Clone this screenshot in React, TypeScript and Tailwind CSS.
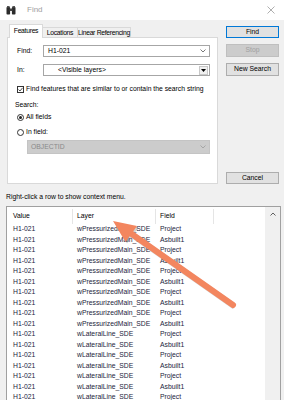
import React from "react";

const rows = [
  ...Array.from({ length: 10 }, (_, i) => ({
    layer: "wPressurizedMain_SDE",
    field: i % 2 === 0 ? "Project" : "Asbuilt1",
  })),
  ...Array.from({ length: 7 }, (_, i) => ({
    layer: "wLateralLine_SDE",
    field: i % 2 === 0 ? "Project" : "Asbuilt1",
  })),
];

function Chevron({ color = "#555" }: { color?: string }) {
  return (
    <svg width="6" height="4" viewBox="0 0 6 4">
      <path d="M0.5 0.5 L3 3 L5.5 0.5" fill="none" stroke={color} strokeWidth="0.8" />
    </svg>
  );
}

export default function App() {
  return (
    <div
      className="relative w-[284px] h-[400px] overflow-hidden bg-[#f0f0f0] text-[6.8px] text-black"
      style={{ fontFamily: '"Liberation Sans", Arial, sans-serif' }}
    >
      {/* title bar */}
      <div className="h-[20px] bg-white flex items-center pl-[6px] pr-[9px]">
        <svg width="10" height="9" viewBox="0 0 10 9">
          <rect x="0.5" y="1" width="3.6" height="7.5" rx="0.8" fill="#2b2b2b" />
          <rect x="5.9" y="1" width="3.6" height="7.5" rx="0.8" fill="#2b2b2b" />
          <rect x="3.5" y="2.5" width="3" height="2.5" fill="#444" />
          <rect x="1" y="0" width="2.6" height="1.5" fill="#555" />
          <rect x="6.4" y="0" width="2.6" height="1.5" fill="#555" />
        </svg>
        <span className="ml-[11px] text-[8px] text-[#a0a0a0]">Find</span>
        <svg className="ml-auto" width="8" height="8" viewBox="0 0 8 8">
          <path d="M0.5 0.5 L7.5 7.5 M7.5 0.5 L0.5 7.5" stroke="#9a9a9a" strokeWidth="0.8" />
        </svg>
      </div>

      {/* main area */}
      <div className="flex pl-[7px] pt-[4px]">
        <div className="w-[211px] flex flex-col">
          {/* tabs */}
          <div className="flex items-end pl-[2px] h-[14px] relative z-10 whitespace-nowrap tracking-[-0.3px]">
            <div className="h-[14px] w-[34px] bg-white border border-b-0 border-[#d9d9d9] flex items-center justify-center pb-[1px]">
              Features
            </div>
            <div className="h-[11px] w-[35px] border border-l-0 border-b-0 border-[#d9d9d9] flex items-center justify-center">
              Locations
            </div>
            <div className="h-[11px] w-[53px] border border-l-0 border-b-0 border-[#d9d9d9] flex items-center justify-center">
              Linear Referencing
            </div>
          </div>

          {/* panel */}
          <div className="-mt-px h-[147px] bg-white border border-[#d9d9d9] pt-[7px] pl-[9px] pr-[7px] flex flex-col">
            <div className="flex items-center h-[12px]">
              <span className="w-[26px]">Find:</span>
              <div className="flex-1 h-[12px] border border-[#a6a6a6] flex items-center pl-[4px] pr-[3px]">
                <span>H1-021</span>
                <span className="ml-auto">
                  <Chevron />
                </span>
              </div>
            </div>
            <div className="flex items-center h-[12px] mt-[7px]">
              <span className="w-[26px]">In:</span>
              <div className="flex-1 h-[12px] border border-[#a6a6a6] flex items-center pl-[14px] pr-px">
                <span>&lt;Visible layers&gt;</span>
                <div className="ml-auto w-[9px] h-[9px] bg-[#f0f0f0] border border-[#c8c8c8] flex items-center justify-center">
                  <svg width="5" height="3" viewBox="0 0 5 3">
                    <path d="M0 0 L5 0 L2.5 3 Z" fill="#000" />
                  </svg>
                </div>
              </div>
            </div>
            <div className="flex items-center h-[8px] mt-[9px]">
              <div className="w-[7px] h-[7px] border border-[#333] flex items-center justify-center">
                <svg width="5" height="5" viewBox="0 0 5 5">
                  <path d="M0.5 2.5 L2 4 L4.6 0.8" fill="none" stroke="#222" strokeWidth="0.8" />
                </svg>
              </div>
              <span className="ml-[2px]">Find features that are similar to or contain the search string</span>
            </div>
            <div className="h-[8px] mt-[8px] -ml-[2px] flex items-center">Search:</div>
            <div className="flex items-center h-[8px] mt-[4px]">
              <div className="w-[7px] h-[7px] rounded-full border border-[#333] flex items-center justify-center">
                <div className="w-[3px] h-[3px] rounded-full bg-[#222]" />
              </div>
              <span className="ml-[2px]">All fields</span>
            </div>
            <div className="flex items-center h-[8px] mt-[7px]">
              <div className="w-[7px] h-[7px] rounded-full border border-[#333]" />
              <span className="ml-[2px]">In field:</span>
            </div>
            <div className="ml-[10px] mt-[4px] h-[14px] bg-[#cccccc] border border-[#c4c4c4] flex items-center pl-[3px] pr-[3px] text-[#8a8a8a]">
              <span>OBJECTID</span>
              <span className="ml-auto">
                <Chevron color="#9a9a9a" />
              </span>
            </div>
          </div>
        </div>

        {/* buttons */}
        <div className="ml-[8px] w-[53px] flex flex-col pt-[2px]">
          <div className="h-[12px] bg-[#e1e1e1] border border-[#0078d7] flex items-center justify-center">Find</div>
          <div className="h-[13px] mt-[6px] bg-[#cccccc] border border-[#bfbfbf] flex items-center justify-center text-[#a0a0a0]">
            Stop
          </div>
          <div className="h-[13px] mt-[6px] bg-[#e1e1e1] border border-[#adadad] flex items-center justify-center">
            New Search
          </div>
          <div className="h-[12px] mt-auto bg-[#e1e1e1] border border-[#adadad] flex items-center justify-center">
            Cancel
          </div>
        </div>
      </div>

      {/* hint */}
      <div className="pl-[6px] mt-[9px] h-[9px] flex items-center">Right-click a row to show context menu.</div>

      {/* results list */}
      <div className="ml-[6px] mr-[3px] mt-[4px] h-[200px] bg-white border border-[#a0a0a0] flex">
        <div className="flex-1 flex flex-col text-[#1c1c3c]">
          <div className="h-[17px] pt-[2px] flex text-black">
            <div className="w-[66px] pl-[6px] flex items-center border-r border-[#e5e5e5]">Value</div>
            <div className="w-[83px] pl-[4px] flex items-center border-r border-[#e5e5e5]">Layer</div>
            <div className="w-[58px] pl-[4px] flex items-center border-r border-[#e5e5e5]">Field</div>
          </div>
          {rows.map((r, i) => (
            <div key={i} className="h-[10.5px] flex items-center">
              <div className="w-[66px] pl-[6px]">H1-021</div>
              <div className="w-[83px] pl-[4px]">{r.layer}</div>
              <div className="w-[58px] pl-[4px]">{r.field}</div>
            </div>
          ))}
        </div>
        <div className="w-[15px] bg-[#f0f0f0] flex justify-center pt-[5px]">
          <svg width="6" height="4" viewBox="0 0 6 4">
            <path d="M0.5 3.5 L3 1 L5.5 3.5" fill="none" stroke="#606060" strokeWidth="1" />
          </svg>
        </div>
      </div>

      {/* annotation arrow */}
      <svg className="absolute inset-0 pointer-events-none" width="284" height="400" viewBox="0 0 284 400">
        <g opacity="0.25" transform="translate(1.5 1.5)">
          <line x1="233" y1="305" x2="131" y2="233.5" stroke="#555" strokeWidth="6" />
          <polygon points="113,221 137,226 125.5,242" fill="#555" />
        </g>
        <line x1="233" y1="305" x2="131" y2="233.5" stroke="#f3865f" strokeWidth="6" strokeLinecap="round" />
        <polygon points="113,221 137,226 125.5,242" fill="#f3865f" />
      </svg>
    </div>
  );
}
